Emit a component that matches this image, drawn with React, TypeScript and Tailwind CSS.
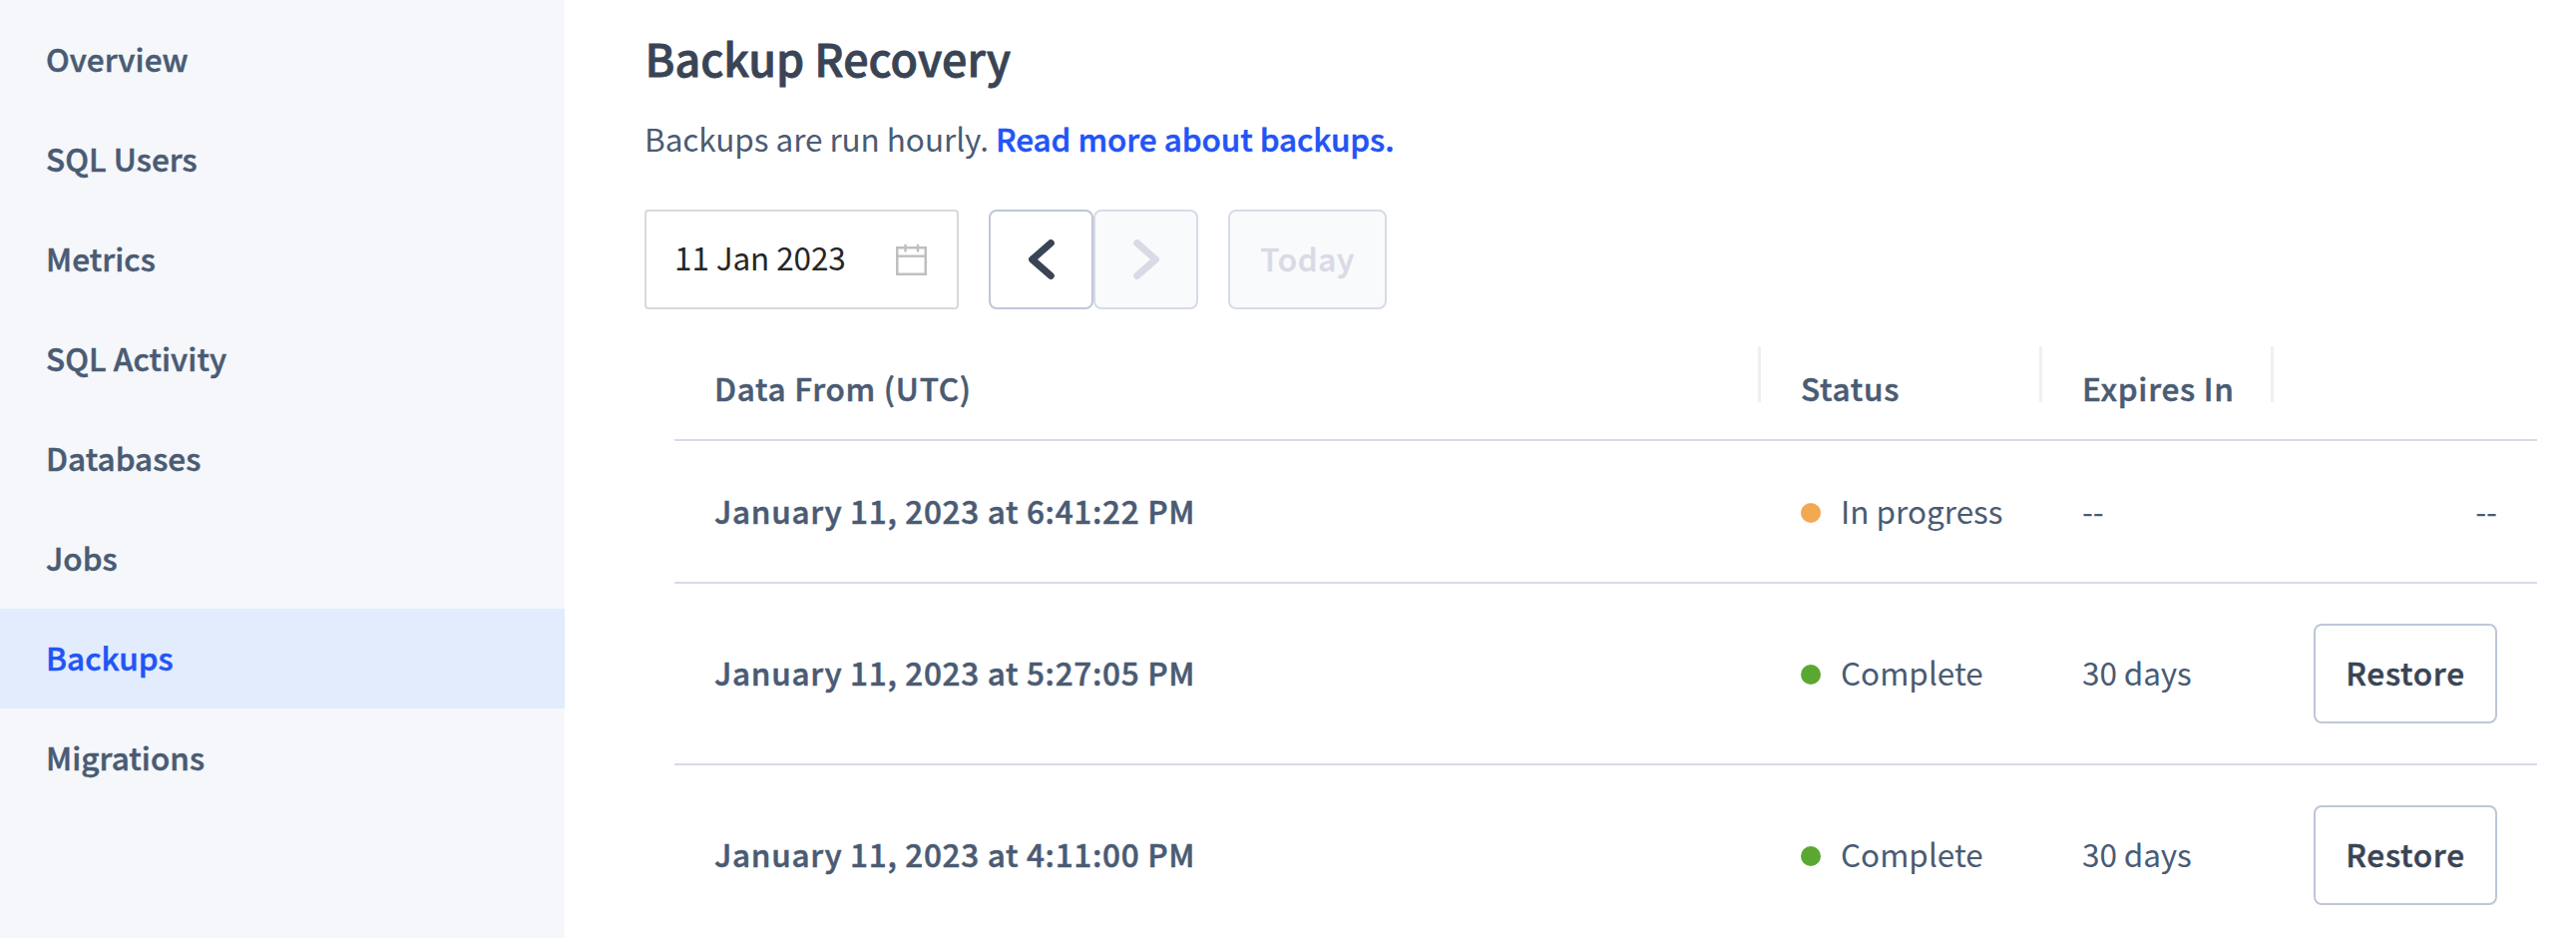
import React from "react";

const NAV = ["Overview", "SQL Users", "Metrics", "SQL Activity", "Databases", "Jobs", "Backups", "Migrations"];

type Backup = { date: string; status: "In progress" | "Complete"; expires: string };

const BACKUPS: Backup[] = [
  { date: "January 11, 2023 at 6:41:22 PM", status: "In progress", expires: "--" },
  { date: "January 11, 2023 at 5:27:05 PM", status: "Complete", expires: "30 days" },
  { date: "January 11, 2023 at 4:11:00 PM", status: "Complete", expires: "30 days" },
];

const GRID = "grid grid-cols-[1089px_282px_232px_264px]";
const SEMIBOLD = "font-medium [-webkit-text-stroke:0.5px_currentColor]";

function Sidebar() {
  return (
    <nav className="w-[566px] shrink-0 bg-[#f5f7fb] pt-[10px]">
      {NAV.map((item) => (
        <a
          key={item}
          className={`flex h-[100px] items-center pb-[4px] pl-[46px] tracking-[0.05px] ${SEMIBOLD} ${
            item === "Backups" ? "bg-[#e2ecfd] text-[#2254f6]" : "text-[#4a5b73]"
          }`}
        >
          {item}
        </a>
      ))}
    </nav>
  );
}

function CalendarIcon() {
  return (
    <svg width="32" height="32" viewBox="0 0 32 32" fill="none" stroke="#bfbfbf">
      <rect x="1.25" y="4.25" width="28.5" height="26.5" strokeWidth="2.5" />
      <path d="M1 12.7H30" strokeWidth="2.4" />
      <path d="M9.5 0.8V8.6M22 0.8V8.6" strokeWidth="2.4" />
    </svg>
  );
}

function Chevron({ direction }: { direction: "left" | "right" }) {
  return (
    <svg width="26" height="40" viewBox="0 0 26 40" fill="none" stroke="currentColor" strokeWidth="7" strokeLinecap="round" strokeLinejoin="round">
      <path d={direction === "left" ? "M22.3 3.6L3.6 20L22.3 36.4" : "M3.7 3.6L22.4 20L3.7 36.4"} />
    </svg>
  );
}

function Toolbar() {
  return (
    <div className="flex h-[100px]">
      <div className="flex w-[315px] items-center justify-between rounded-[4px] border-2 border-[#d9d9d9] pr-[29px] pl-[28px] text-[#262626]">
        <span className="pb-[6px] tracking-[-0.1px]">11 Jan 2023</span>
        <CalendarIcon />
      </div>
      <button className="ml-[30px] flex w-[105px] items-center justify-center rounded-[8px] border-2 border-[#c0c6d9] text-[#394455]">
        <Chevron direction="left" />
      </button>
      <button className="flex w-[105px] items-center justify-center rounded-[8px] border-2 border-[#d6dbe7] bg-[#f9fafc] text-[#d9dae6]">
        <Chevron direction="right" />
      </button>
      <button className={`ml-[30px] flex w-[159px] items-center justify-center rounded-[8px] border-2 border-[#d6dbe7] bg-[#f9fafc] pb-[5px] tracking-[0.6px] text-[#d9dae6] ${SEMIBOLD}`}>
        Today
      </button>
    </div>
  );
}

function HeaderCell({ children, divided }: { children?: React.ReactNode; divided: boolean }) {
  return (
    <div className="flex justify-between">
      <span className={`pt-[36px] pl-[40px] tracking-[0.75px] ${SEMIBOLD}`}>{children}</span>
      {divided && <span className="mt-[19px] h-[56px] w-[3px] bg-[#f0f0f0]" />}
    </div>
  );
}

function BackupTable() {
  return (
    <div className="ml-[30px] w-[1867px] text-[#4a5b73]">
      <div className={`${GRID} mt-[18px] h-[114px] border-b-2 border-[#d6dbe7]`}>
        <HeaderCell divided>Data From (UTC)</HeaderCell>
        <HeaderCell divided>Status</HeaderCell>
        <HeaderCell divided>Expires In</HeaderCell>
        <HeaderCell divided={false} />
      </div>
      {BACKUPS.map((b) => {
        const done = b.status === "Complete";
        return (
          <div
            key={b.date}
            className={`${GRID} items-center border-b-2 border-[#d6dbe7] ${done ? "h-[182px]" : "h-[143px]"}`}
          >
            <span className={`pb-[4px] pl-[40px] tracking-[0.7px] ${SEMIBOLD}`}>{b.date}</span>
            <span className="flex items-center gap-[20px] pl-[40px]">
              <i className={`mt-[2px] size-[20px] rounded-full ${done ? "bg-[#5aa832]" : "bg-[#f3a952]"}`} />
              <span className="pb-[4px]">{b.status}</span>
            </span>
            <span className="pb-[4px] pl-[40px] tracking-[-0.1px]">{b.expires}</span>
            <span className="flex justify-end pr-[40px]">
              {done ? (
                <button className={`flex h-[100px] w-[184px] items-center justify-center rounded-[8px] border-2 border-[#c0c6d9] pb-[4px] tracking-[0.75px] text-[#394455] ${SEMIBOLD}`}>
                  Restore
                </button>
              ) : (
                <span className="pb-[4px]">--</span>
              )}
            </span>
          </div>
        );
      })}
    </div>
  );
}

export default function App() {
  return (
    <div className="flex h-[940px] w-[2582px] overflow-hidden bg-white font-['Noto_Sans_CJK_JP','Noto_Sans',sans-serif] text-[31.5px] leading-[48px]">
      <Sidebar />
      <main className="w-[2016px] pl-[80px]">
        <h1 className="pt-[24px] pl-[0.5px] text-[44.8px] leading-[68px] font-medium text-[#394455] [-webkit-text-stroke:0.8px_currentColor]">
          Backup Recovery
        </h1>
        <p className="mt-[22px] mb-[48px] tracking-[-0.05px] text-[#4a5b73]">
          Backups are run hourly. <a className={`text-[#2254f6] ${SEMIBOLD}`}>Read more about backups.</a>
        </p>
        <Toolbar />
        <BackupTable />
      </main>
    </div>
  );
}
